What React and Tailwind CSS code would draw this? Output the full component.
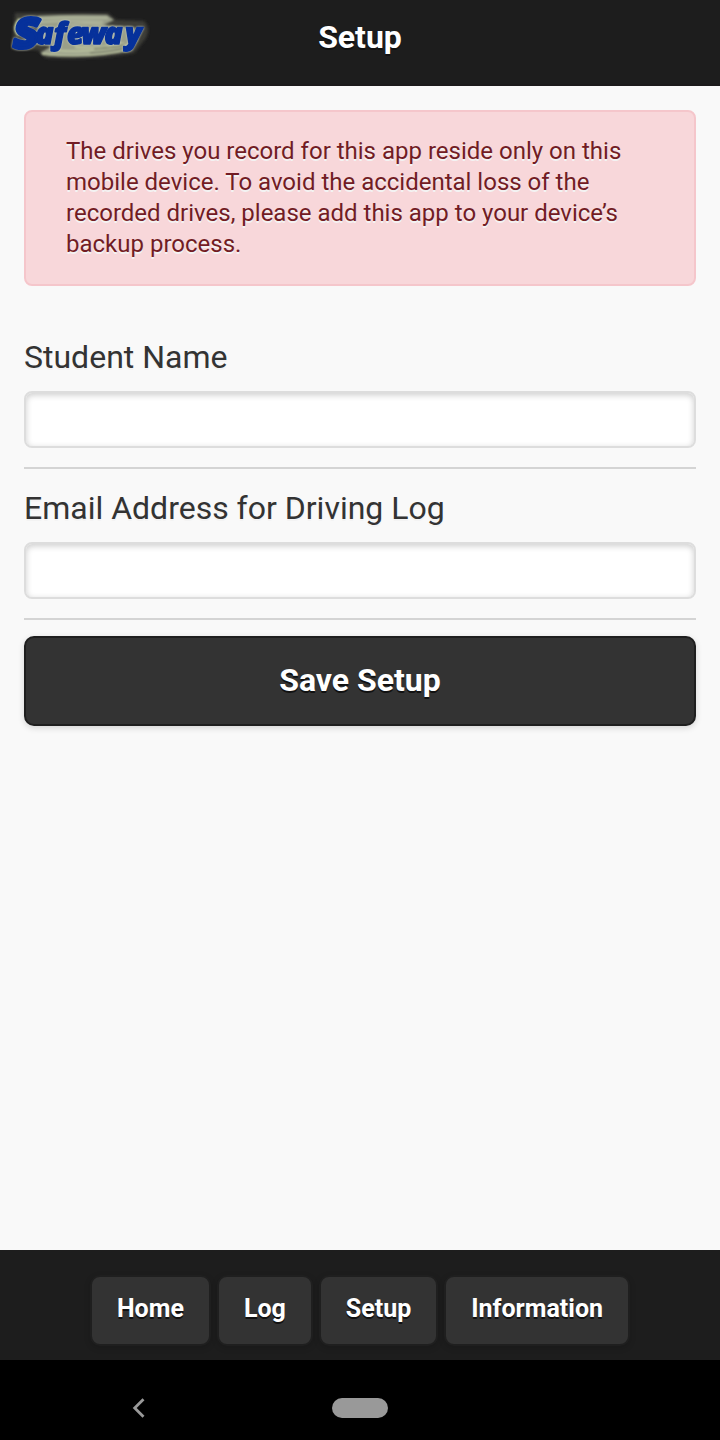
import React, { useState } from 'react';

const tabs = ['Home', 'Log', 'Setup', 'Information'];

const Logo = () => (
  <svg className="absolute left-0 top-0" width="160" height="72" viewBox="0 0 160 72">
    <defs>
      <filter id="soft" x="-10%" y="-20%" width="120%" height="140%">
        <feGaussianBlur stdDeviation="0.8" />
      </filter>
      <filter id="glow" x="-10%" y="-20%" width="120%" height="140%">
        <feGaussianBlur stdDeviation="1.6" />
      </filter>
    </defs>
    <path
      d="M15 13L108 13L116 20L144 21Q151 28 146 38L134 53Q100 60 46 58L38 50L12 49Z"
      fill="#3c3c38"
      filter="url(#glow)"
    />
    <g filter="url(#soft)">
      <path d="M38 16Q70 14 107 15L114 20L104 25L134 27L138 40L130 49Q100 58 50 56L40 53L52 46L36 44Z" fill="#9a9f89" />
      <path d="M40 18Q72 17 108 18M40 22Q70 20 103 22M70 25Q87 22 102 25" fill="none" stroke="#b6bca1" strokeWidth="1.6" />
      <path d="M42 54Q90 59 132 49M53 50Q90 54 129 45M75 47Q100 49 124 43" fill="none" stroke="#bcc4a0" strokeWidth="1.8" />
      <path d="M94 49Q112 48 124 45M90 53Q110 52 126 48" fill="none" stroke="#4d5146" strokeWidth="1.2" />
      <path d="M20 19Q12 28 19 35" fill="none" stroke="#c8d59b" strokeWidth="3" />
    </g>
    <g
      fill="#06319b"
      stroke="#06319b"
      strokeLinejoin="round"
      fontFamily="'Open Sans', sans-serif"
      fontWeight="800"
      className="[filter:drop-shadow(0_0_1px_#ccd3c4)_blur(0.5px)]"
    >
      <text transform="translate(11.5 48) skewX(-10)" fontSize="42" strokeWidth="3.4" textLength="25" lengthAdjust="spacingAndGlyphs">S</text>
      <text
        transform="translate(0 44) skewX(1)"
        fontSize="30"
        fontStyle="italic"
        strokeWidth="1.5"
        x="35.5 54 67 81.5 104.5 125.5"
      >
        afeway
      </text>
    </g>
  </svg>
);

const Field = ({ id, label, type, value, onChange }) => (
  <div className="border-b-2 border-[#d4d4d4] pb-[19px]">
    <label htmlFor={id} className="block pb-[13px] text-[32px] leading-[42px] [text-shadow:0_2px_0_#f3f3f3]">
      {label}
    </label>
    <input
      id={id}
      type={type}
      value={value}
      onChange={(e) => onChange(e.target.value)}
      className="block h-[57px] w-full rounded-lg border-2 border-[#ddd] bg-white px-3 shadow-[inset_0_2px_6px_rgba(0,0,0,0.2)] outline-none"
    />
  </div>
);

const App = () => {
  const [name, setName] = useState('');
  const [email, setEmail] = useState('');

  return (
    <div className="flex h-[1440px] w-[720px] flex-col overflow-hidden bg-[#f9f9f9] font-['Roboto',sans-serif] text-[#333]">
      <header className="relative h-[86px] shrink-0 border-b-2 border-[#1c1a1b] bg-[#1d1d1d]">
        <Logo />
        <h1 className="pt-4 text-center text-[32px] leading-[42px] font-bold text-white [text-shadow:0_2px_0_#111]">
          Setup
        </h1>
      </header>

      <main className="flex-1 px-6 pt-6">
        <div className="h-[176px] rounded-lg border-2 border-[#f5c6cb] bg-[#f8d7da] px-10 pt-6 text-[24px] leading-[31px] text-[#721c24] [text-shadow:0_2px_0_#f3f3f3]">
          The drives you record for this app reside only on this mobile device. To avoid the accidental loss of the
          recorded drives, please add this app to your device’s backup process.
        </div>

        <form className="pt-[50px]" onSubmit={(e) => e.preventDefault()}>
          <Field id="student" label="Student Name" type="text" value={name} onChange={setName} />
          <div className="pt-[18px]">
            <Field id="email" label="Email Address for Driving Log" type="email" value={email} onChange={setEmail} />
          </div>
          <button
            type="submit"
            className="mt-4 block h-[90px] w-full rounded-[10px] border-2 border-[#1f1f1f] bg-[#333] pb-0.5 text-[32px] leading-[42px] font-bold text-white shadow-[0_2px_6px_rgba(0,0,0,0.15)] [text-shadow:0_2px_0_#111]"
          >
            Save Setup
          </button>
        </form>
      </main>

      <footer className="flex h-[110px] shrink-0 justify-center gap-[6px] bg-[#1d1d1d] pt-[25px]">
        {tabs.map((tab) => (
          <button
            key={tab}
            className="h-[71px] rounded-[10px] border-2 border-[#1f1f1f] bg-[#333] px-[25px] pb-1 text-[25px] font-bold text-white shadow-[0_2px_6px_rgba(0,0,0,0.15)] [text-shadow:0_2px_0_#111]"
          >
            {tab}
          </button>
        ))}
      </footer>

      <nav className="relative h-20 shrink-0 bg-black pt-[38px]">
        <svg className="absolute left-[130px] top-[36px]" width="20" height="24" viewBox="0 0 20 24">
          <path d="M13.5 3.2L4.7 12L13.5 20.8" fill="none" stroke="#999" strokeWidth="2.8" />
        </svg>
        <div className="mx-auto h-5 w-14 rounded-full bg-[#999]"></div>
      </nav>
    </div>
  );
};

export default App;
